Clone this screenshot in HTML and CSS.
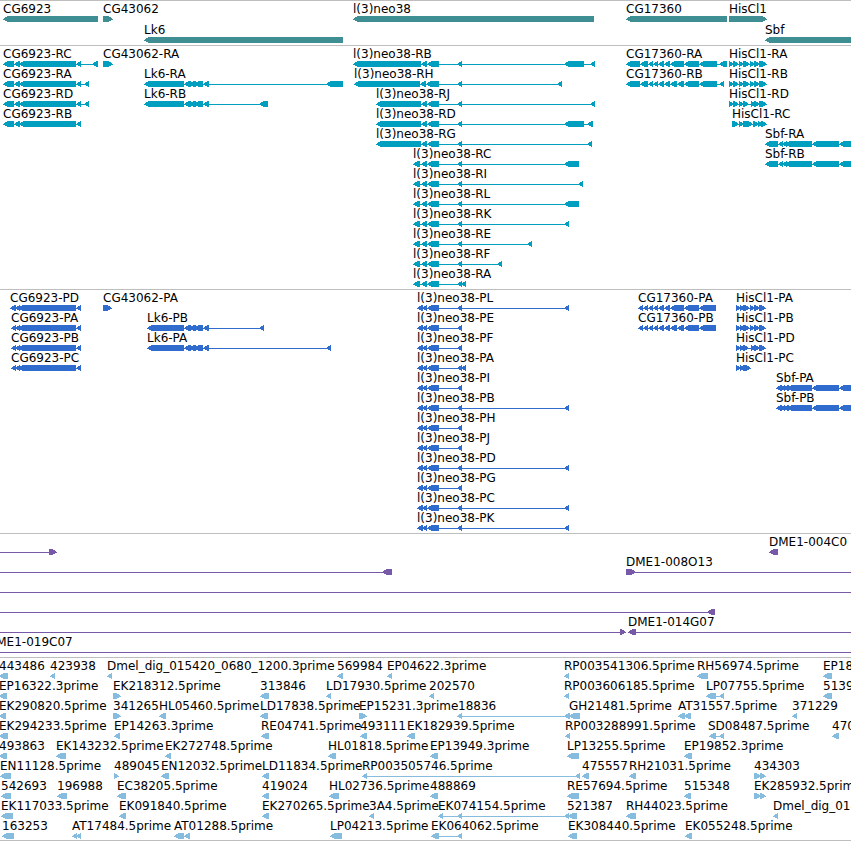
FILE: index.html
```html
<!DOCTYPE html>
<html lang="en">
<head>
<meta charset="utf-8">
<title>Genome tracks</title>
<link rel="stylesheet" href="styles.css">
</head>
<body>
<main class="browser">
  <section class="track genes" id="genes" aria-label="Genes"></section>
  <section class="track transcripts" id="transcripts" aria-label="Transcripts"></section>
  <section class="track proteins" id="proteins" aria-label="Proteins"></section>
  <section class="track clones" id="clones" aria-label="Clones"></section>
  <section class="track ests" id="ests" aria-label="ESTs"></section>
</main>
<script src="tracks.js"></script>
</body>
</html>
```
FILE: styles.css
```css
body {
  margin: 0;
  background: #fff;
  color: #000;
  font-family: "DejaVu Sans", sans-serif;
  font-size: 12px;
}

.browser {
  overflow: hidden;
  border-bottom: 1px solid #bebebe;
}

.track {
  border-top: 1px solid #bebebe;
  padding-bottom: 3px;
}

.row {
  position: relative;
  display: flex;
  flex-direction: column;
  justify-content: flex-end;
  height: 20px;
}

/* Labels sit at their feature's place on the sequence axis. */
.label {
  position: absolute;
  top: 0;
  line-height: 16px;
  white-space: nowrap;
}

.glyphs {
  display: block;
  flex: none;
  width: 100%;
  height: 5px;
  overflow: visible;
  fill: currentColor;
  shape-rendering: crispEdges;
}

.genes {
  padding-bottom: 2px;
}

.genes .row {
  height: 21px;
}

.genes .glyphs {
  height: 6px;
  color: #3f8e94;
}

.transcripts .glyphs {
  color: #009fc0;
}

.proteins .glyphs {
  color: #306ccd;
}

.clones .glyphs {
  color: #7759a8;
}

.ests {
  padding-bottom: 2px;
}

.ests .glyphs {
  color: #86bcde;
}
```
FILE: tracks.js
```js
// Glyph notation: "<a:b" exon on the reverse strand, ">a:b" exon on the
// forward strand, "a~b" intron line. Each feature is [label, position, glyphs].

function chain(points) {
  return points.slice(1).map((p, i) => "<" + points[i] + ":" + p).join(" ");
}

const cg6923 = "<14:20 <19:76 <76:81";
const lk6 = "<184:191 <189:196 <194:203 <203:209";
const neoMid = " <421:427 <427:439 439~457 <457:462";
const neoShort = "<413:420 420~422 <421:427 <427:439 439~457 <457:462";
const cgA = chain([626, 640, 648, 653, 658, 664, 670, 684, 699, 717]);
const cgB = chain([626, 640, 648, 653, 658, 664, 670, 677, 684, 699, 717]);
const hisTail = " >750:755 >754:760 >759:767";
const sbf = "<765:778 <778:783 <782:787 <785:812 <812:839 <839:1000";
const neoP = "<417:423 <422:427 <427:439 439~457 <457:462";
const neoPLong = neoP + " 462~564 <564:569";
const cgPA = chain([638, 643, 648, 653, 658, 664, 670, 684, 699, 716]);
const cgPB = chain([638, 643, 648, 653, 658, 664, 670, 677, 684, 699, 716]);
const hisP = ">736:741 >740:745 >743:750 >750:755 >754:760 >759:766";
const sbfP = "<776:782 <780:785 <783:789 <787:812 <812:839 <839:1000";

const tracks = {
  genes: [
    [["CG6923", 3, "<3:98"], ["CG43062", 103, ">103:113"], ["l(3)neo38", 353, "<353:594"],
     ["CG17360", 626, "<626:727"], ["HisCl1", 729, ">729:767"]],
    [["Lk6", 144, "<144:343"], ["Sbf", 765, "<765:1000"]]
  ],
  transcripts: [
    [["CG6923-RC", 3, "<3:14 " + cg6923 + " 81~92 <92:98"], ["CG43062-RA", 103, ">103:113"],
     ["l(3)neo38-RB", 353, "<353:421" + neoMid + " 462~564 <564:584 584~590 <590:595"],
     ["CG17360-RA", 626, cgA + " 717~719 <719:727"],
     ["HisCl1-RA", 729, ">729:734 >733:739 >739:744 >743:750" + hisTail]],
    [["CG6923-RA", 3, "<3:14 " + cg6923 + " 81~84 <84:89"],
     ["Lk6-RA", 144, "<144:184 " + lk6 + " 209~326 <326:343"],
     ["l(3)neo38-RH", 354, "<354:420 <420:426 <426:439 439~457 <457:462 462~557 <557:562"],
     ["CG17360-RB", 626, cgB + " 717~719 <719:724"],
     ["HisCl1-RB", 729, ">729:734 >733:739 >739:744 >743:750" + hisTail]],
    [["CG6923-RD", 3, "<3:14 " + cg6923 + " 81~84 <84:89"],
     ["Lk6-RB", 144, "<144:184 " + lk6 + " 209~259 <259:268"],
     ["l(3)neo38-RJ", 376, "<376:421" + neoMid + " 462~590 <590:595"],
     ["HisCl1-RD", 729, ">729:734 >733:739 >739:744 >743:749 749~751 >751:756 >754:760 >759:767"]],
    [["CG6923-RB", 3, "<3:14 " + cg6923],
     ["l(3)neo38-RD", 376, "<376:421" + neoMid + " 462~564 <564:584 584~587 <587:593"],
     ["HisCl1-RC", 732, ">732:739 >739:744 >743:753 >753:759 >758:763 >761:767"]],
    [["l(3)neo38-RG", 376, "<376:421" + neoMid + " 462~587 <587:592"], ["Sbf-RA", 765, sbf]],
    [["l(3)neo38-RC", 413, neoShort + " 462~564 <564:579"], ["Sbf-RB", 765, sbf]],
    [["l(3)neo38-RI", 413, neoShort + " 462~578 <578:583"]],
    [["l(3)neo38-RL", 413, neoShort + " 462~564 <564:579"]],
    [["l(3)neo38-RK", 413, neoShort + " 462~564 <564:569"]],
    [["l(3)neo38-RE", 413, neoShort + " 462~527 <527:532"]],
    [["l(3)neo38-RF", 413, neoShort + " 462~497 <497:502"]],
    [["l(3)neo38-RA", 413, neoShort + " <461:466"]]
  ],
  proteins: [
    [["CG6923-PD", 10, "<10:16 <15:20 <18:76 <76:81"], ["CG43062-PA", 103, ">103:112"],
     ["l(3)neo38-PL", 417, neoPLong], ["CG17360-PA", 638, cgPA], ["HisCl1-PA", 736, hisP]],
    [["CG6923-PA", 11, "<11:16 <15:20 <18:76 <76:81"],
     ["Lk6-PB", 147, "<147:184 " + lk6 + " 209~259 <259:264"],
     ["l(3)neo38-PE", 417, neoP], ["CG17360-PB", 638, cgPB], ["HisCl1-PB", 736, hisP]],
    [["CG6923-PB", 11, "<11:16 <15:20 <18:76 <76:81"],
     ["Lk6-PA", 147, "<147:184 " + lk6 + " 209~326 <326:331"],
     ["l(3)neo38-PF", 417, neoP],
     ["HisCl1-PD", 736, ">736:741 >740:745 >743:749 749~751 >751:756 >754:760 >759:766"]],
    [["CG6923-PC", 11, "<11:16 <15:20 <18:76 <76:81"],
     ["l(3)neo38-PA", 417, neoP + " <461:466"], ["HisCl1-PC", 736, ">736:741 >740:745 >743:751"]],
    [["l(3)neo38-PI", 417, neoP], ["Sbf-PA", 776, sbfP]],
    [["l(3)neo38-PB", 417, neoPLong], ["Sbf-PB", 776, sbfP]],
    [["l(3)neo38-PH", 417, neoP]],
    [["l(3)neo38-PJ", 417, neoP]],
    [["l(3)neo38-PD", 417, neoPLong]],
    [["l(3)neo38-PG", 417, neoP]],
    [["l(3)neo38-PC", 417, neoPLong]],
    [["l(3)neo38-PK", 417, neoPLong]]
  ],
  clones: [
    [["", 0, "0~49 >49:57"], ["DME1-004C0", 769, "<769:778"]],
    [["", 0, "0~382 <382:392"], ["DME1-008O13", 626, ">626:636 636~1000"]],
    [["", 0, "0~1000"]],
    [["", 0, "0~707 <707:715"]],
    [["", 0, "0~620 >620:626"], ["DME1-014G07", 628, "<628:636 636~1000"]],
    [["DME1-019C07", -13, "0~1000"]]
  ],
  ests: [
    [["443486", -1, "<-1:8"], ["423938", 50, "<50:55"],
     ["Dmel_dig_015420_0680_1200.3prime", 107, "<107:112"], ["569984", 337, "<337:343"],
     ["EP04622.3prime", 387, "<387:392"], ["RP003541306.5prime", 564, "<564:569"],
     ["RH56974.5prime", 697, "<697:708"], ["EP18", 823, "<823:832"]],
    [["EP16322.3prime", -1, "<-1:7"], ["EK218312.5prime", 113, ">113:121"],
     ["313846", 260, "<260:269"], ["LD17930.5prime", 326, "<326:331"],
     ["202570", 429, "<429:434"], ["RP003606185.5prime", 564, "<564:569"],
     ["LP07755.5prime", 706, "<706:716 716~719 <719:724"], ["5139", 823, "<823:832"]],
    [["EK290820.5prime", -1, "<-1:6"], ["341265", 113, ">113:121"],
     ["HL05460.5prime", 159, "<159:166"], ["LD17838.5prime", 260, "<260:268"],
     ["EP15231.3prime", 359, ">359:367"], ["18836", 458, "<457:462 462~564 <564:570"],
     ["GH21481.5prime", 569, "<569:580"], ["AT31557.5prime", 678, "<678:685 <684:691"],
     ["371229", 792, "<792:797"]],
    [["EK294233.5prime", -1, "<-1:8"], ["EP14263.3prime", 114, "<114:120"],
     ["RE04741.5prime", 261, "<261:269"], ["493111", 360, "<360:367"],
     ["EK182939.5prime", 407, "<407:415"], ["RP003288991.5prime", 565, "<565:570"],
     ["SD08487.5prime", 708, "<709:716 716~719 <719:724"], ["470", 832, "<832:839"]],
    [["493863", -1, "<-1:7"], ["EK143232.5prime", 56, "<56:66"],
     ["EK272748.5prime", 165, "<165:171"], ["HL01818.5prime", 328, "<328:336"],
     ["EP13949.3prime", 430, "<430:438"], ["LP13255.5prime", 567, "<567:579"],
     ["EP19852.3prime", 684, "<684:692"]],
    [["EN11128.5prime", 0, "<0:11"], ["489045", 114, ">114:119"],
     ["EN12032.5prime", 161, "<161:169"], ["LD11834.5prime", 262, "<262:269"],
     ["RP003505746.5prime", 362, "<362:367 367~575 <575:580"], ["475557", 582, "<582:589"],
     ["RH21031.5prime", 629, "<629:636"], ["434303", 754, ">754:761 >760:766"]],
    [["542693", 1, "<1:11"], ["196988", 57, "<57:67"], ["EC38205.5prime", 117, "<117:126"],
     ["419024", 262, "<262:269"], ["HL02736.5prime", 329, "<329:339"],
     ["488869", 430, "<430:438"], ["RE57694.5prime", 567, "<567:579"],
     ["515348", 684, "<684:691"], ["EK285932.5prime", 754, ">754:761 >760:766"]],
    [["EK117033.5prime", 1, "<1:13"], ["EK091840.5prime", 119, "<119:126"],
     ["EK270265.5prime", 262, "<262:269"], ["3A4.5prime", 369, "<369:374"],
     ["EK074154.5prime", 438, "<438:443 443~457 <457:462 462~564 <564:569"],
     ["521387", 567, "<568:577"], ["RH44023.5prime", 626, "<626:636"],
     ["Dmel_dig_014", 773, "<773:778"]],
    [["163253", 2, "<2:14"], ["AT17484.5prime", 72, "<72:77 <76:81"],
     ["AT01288.5prime", 174, "<174:184 <184:190"], ["LP04213.5prime", 330, "<330:342"],
     ["EK064062.5prime", 431, "<431:439 439~457 <457:462"],
     ["EK308440.5prime", 568, "<568:577"], ["EK055248.5prime", 685, "<685:692"]]
  ]
};

// Exons are 6px bars whose leading end tapers in a rounded, stepped head.
function glyphPath(token) {
  const [a, b] = token.replace(/^[<>]/, "").split(/[:~]/).map(Number);
  if (token.includes("~")) return `M${a} 3H${b}V4H${a}Z`;
  const tip = token[0] === "<" ? a : b;
  const tail = token[0] === "<" ? b : a;
  const s = token[0] === "<" ? 1 : -1;
  return `M${tip} 3H${tip + s}V2H${tip + 2 * s}V1H${tip + 4 * s}V0H${tail}` +
    `V6H${tip + 4 * s}V5H${tip + 2 * s}V4H${tip}Z`;
}

for (const [id, rows] of Object.entries(tracks)) {
  const track = document.getElementById(id);
  for (const features of rows) {
    const row = document.createElement("div");
    row.className = "row";
    for (const [text, x] of features) {
      if (!text) continue;
      const label = document.createElement("span");
      label.className = "label";
      label.style.left = x + "px";
      label.textContent = text;
      row.append(label);
    }
    const paths = features.flatMap(f => f[2].split(" ").map(t => `<path d="${glyphPath(t)}"/>`)).join("");
    row.insertAdjacentHTML("beforeend", `<svg class="glyphs" aria-hidden="true">${paths}</svg>`);
    track.append(row);
  }
}
```
